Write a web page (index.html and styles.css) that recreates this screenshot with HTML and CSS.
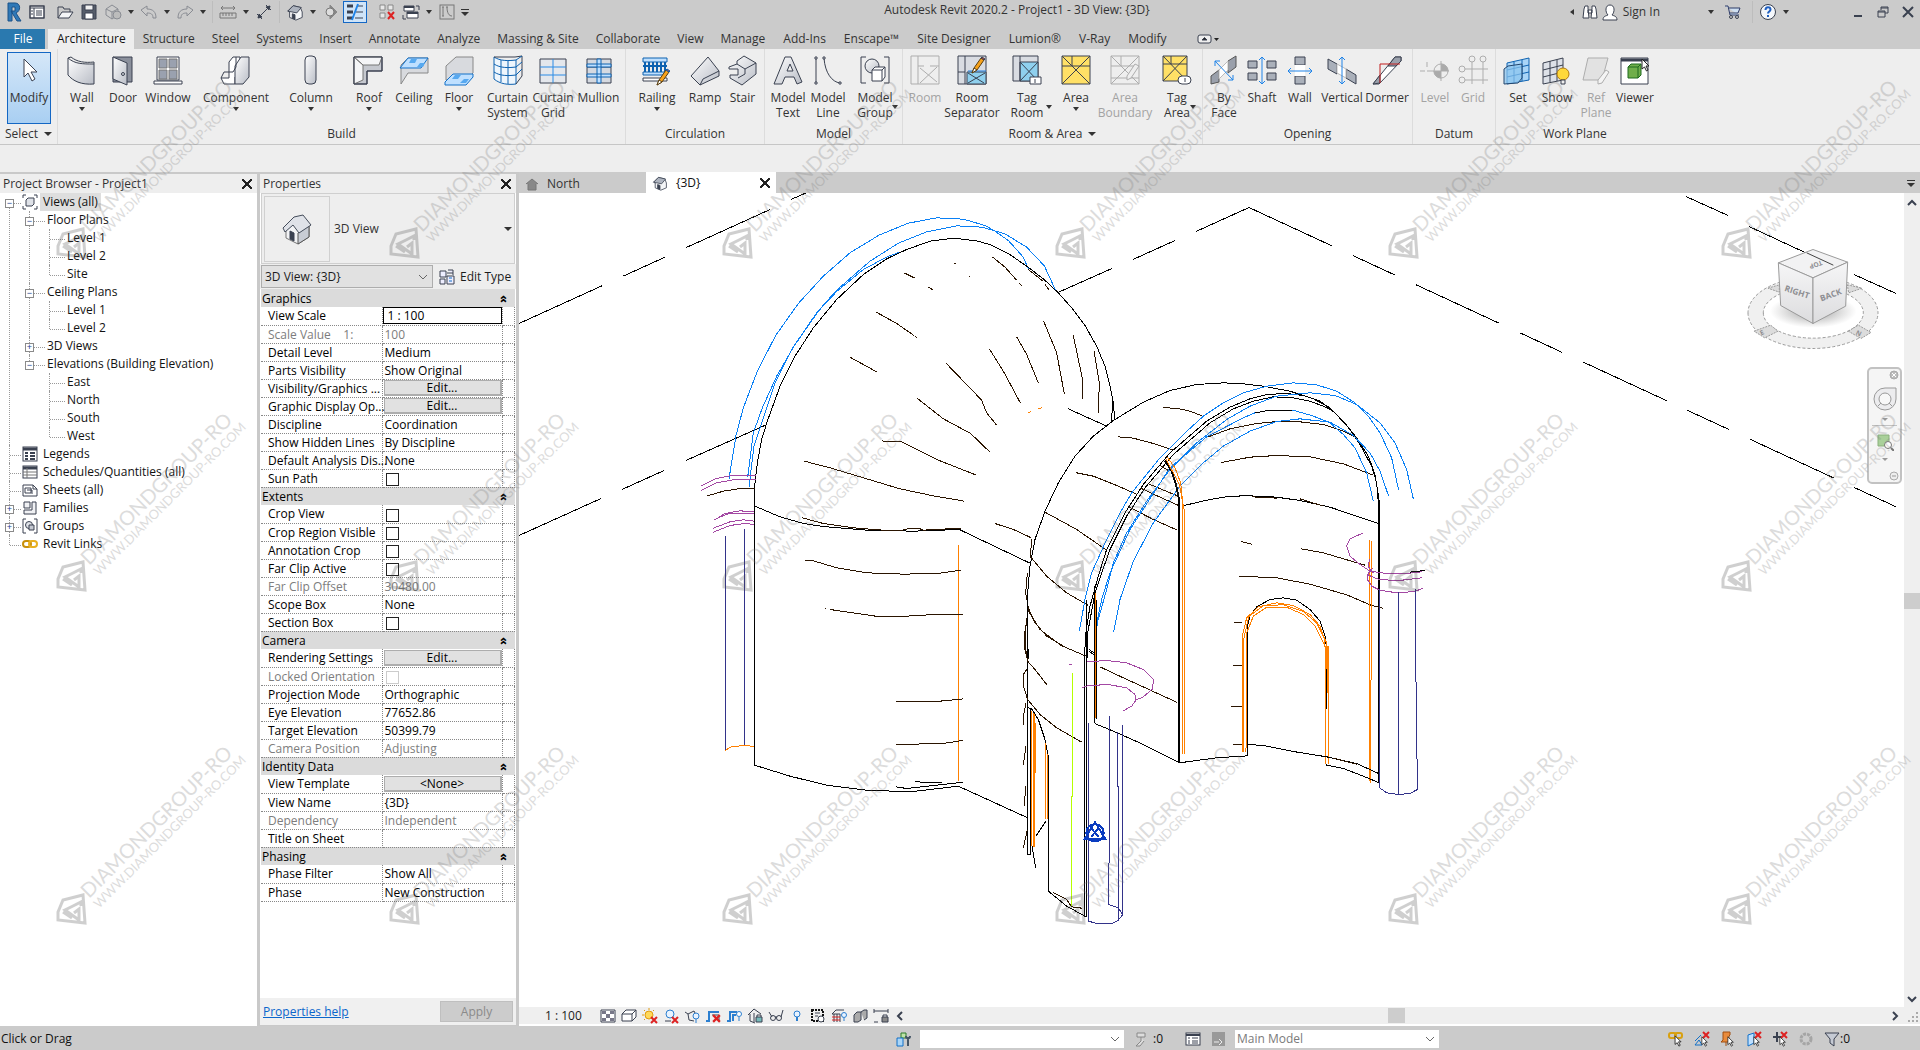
FILE: index.html
```html
<!DOCTYPE html>
<html lang="en">
<head>
<meta charset="utf-8">
<title>Autodesk Revit 2020.2 - Project1 - 3D View: {3D}</title>
<link rel="stylesheet" href="styles.css">
</head>
<body>
<svg class="defs" aria-hidden="true">
  <defs>
    <linearGradient id="steel" x1="0" y1="0" x2="1" y2="1"><stop offset="0" stop-color="#fff"/><stop offset="1" stop-color="#b9bdc6"/></linearGradient>
    <linearGradient id="faceL" x1="0" y1="0" x2="0" y2="1"><stop offset="0" stop-color="#f6f6f7"/><stop offset="1" stop-color="#dcdcde"/></linearGradient>
    <radialGradient id="shade"><stop offset="0" stop-color="#777" stop-opacity=".8"/><stop offset="1" stop-color="#999" stop-opacity="0"/></radialGradient>
    <symbol id="hatch-house" viewBox="0 0 20 20"><path d="M2 9 8 3l8 2 2 5v6l-7 3-7-3v-6z" fill="#f4f5f7" stroke="#3a4150"/><path d="M2 9l6-6 9 2-5 6z" fill="#aeb4bf" stroke="#3a4150"/><path d="M7 17v-5l3 1v5z" fill="#3a4150"/></symbol>
    <symbol id="cursor" viewBox="0 0 10 14"><path d="M1 1v10l2.500-2 2 4 1.500-1-2-4h3z" fill="#fff" stroke="#222" stroke-width="1"/></symbol>
    <symbol id="redx" viewBox="0 0 8 8"><path d="M1 1l6 6M7 1l-6 6" stroke="#d22" stroke-width="2" fill="none"/></symbol>
    <symbol id="pencil" viewBox="0 0 14 18"><path d="M1 17l2-5 7-10 3 2-7 10z" fill="#f7a21b" stroke="#5a4012"/><path d="M10 2l1-1 3 2-1 1z" fill="#d43"/><path d="M1 17l2-5 3 2z" fill="#fff" stroke="#5a4012"/></symbol>
  </defs>
</svg>

<div class="app">
<header class="titlebar">
  <div class="qat">
    <button class="q" aria-label="Revit"><svg width="18" height="20" viewBox="0 0 18 20"><path d="M4 1v18h4V5h3v4H7l6 10h4l-5-8c5-2 5-10-1-10z" fill="#2f78b7" stroke="#1d5288"/></svg></button>
    <button class="q" aria-label="Properties"><svg width="16" height="16" viewBox="0 0 16 16"><rect x="1" y="2" width="14" height="12" fill="#fff"/><path d="M1 4h14M5 4v10M7 7h6M7 9h6M7 11h6M2 7h2M2 10h2"/><rect x="1" y="2" width="14" height="12"/></svg></button>
    <button class="q first" aria-label="Open"><svg width="18" height="16" viewBox="0 0 18 16"><path d="M2 14V3h5l1 2h6v3" /><path d="M2 14l4-6h11l-4 6z" fill="#f4f5f7"/></svg></button>
    <button class="q" aria-label="Save"><svg width="16" height="16" viewBox="0 0 16 16"><path d="M1 1h14v14H1z" fill="#565d6a"/><path d="M4 1h8v5H4z" fill="#f1f1f1"/><path d="M4 9h8v6H4z" fill="#fff"/></svg></button>
    <button class="q dim" aria-label="Synchronize"><svg width="18" height="18" viewBox="0 0 18 18"><path d="M2 6l6-4 6 4v6l-6 4-6-4zM2 6l6 3 6-3M8 9v7"/><circle cx="13" cy="12" r="4" fill="#aaa"/></svg></button>
    <button class="caret" aria-label="Synchronize options"></button>
    <button class="q dim" aria-label="Undo"><svg width="18" height="16" viewBox="0 0 18 16"><path d="M1 6l6-4v3c6 0 9 3 9 9h-3c0-4-2-5-6-5v3z"/></svg></button>
    <button class="caret" aria-label="Undo list"></button>
    <button class="q dim" aria-label="Redo"><svg width="18" height="16" viewBox="0 0 18 16"><path d="M17 6l-6-4v3c-6 0-9 3-9 9h3c0-4 2-5 6-5v3z"/></svg></button>
    <button class="caret" aria-label="Redo list"></button>
    <i class="vsep"></i>
    <button class="q" aria-label="Measure"><svg width="18" height="14" viewBox="0 0 18 14"><path d="M2 3h14M4 1L2 3l2 2M14 1l2 2-2 2" stroke="#777"/><path d="M1 8h16v5H1zM4 8v3M7 8v3M10 8v3M13 8v3" stroke="#777"/></svg></button>
    <button class="caret" aria-label="Measure options"></button>
    <button class="q" aria-label="Aligned dimension"><svg width="18" height="18" viewBox="0 0 18 18"><path d="M3 15L15 3M2 11l5 5M11 2l5 5"/><path d="M3 15l1-4 3 3zM15 3l-1 4-3-3z" fill="#3a4150"/></svg></button>
    <i class="vsep"></i>
    <button class="q" aria-label="Default 3D view"><svg width="18" height="18"><use href="#hatch-house"/></svg></button>
    <button class="caret" aria-label="3D view options"></button>
    <button class="q" aria-label="Section"><svg width="14" height="16" viewBox="0 0 14 16"><path d="M6 1l7 7-7 7z" fill="#888" stroke="#888"/><circle cx="6" cy="8" r="4" fill="#ddd" stroke="#777"/></svg></button>
    <button class="q on" aria-label="Thin lines"><svg width="18" height="18" viewBox="0 0 18 18"><path d="M1 3h6M1 9h6M1 15h6" stroke-width="3"/><path d="M11 3h6M10 9h7M9 15h8"/><path d="M12 1L6 17" stroke="#1e83e8" stroke-width="2"/></svg></button>
    <button class="q gap" aria-label="Close inactive views"><svg width="18" height="18" viewBox="0 0 18 18"><path d="M2 2h5v5H2zM10 2h5v5h-5zM2 10h5v5H2z" fill="#e8e8e8" stroke="#888"/><path d="M10 9l6 7M16 9l-6 7" stroke="#d22" stroke-width="2"/></svg></button>
    <button class="q" aria-label="Switch windows"><svg width="18" height="18" viewBox="0 0 18 18"><path d="M2 3h10v5H2z" fill="#fff"/><path d="M5 9h11v6H5z" fill="#fff"/><path d="M5 10h11M2 4h10" stroke-width="2"/><path d="M14 3h3v4M1 12v4h3"/></svg></button>
    <button class="caret" aria-label="Switch windows list"></button>
    <button class="q" aria-label="Shape editing"><svg width="16" height="16" viewBox="0 0 16 16"><rect x="1" y="1" width="14" height="14" stroke="#777"/><path d="M4 3v9M8 3c0 6 2 9 5 9M3 3h2M3 12h2M7 3h2" stroke="#777"/></svg></button>
    <button class="caret bar" aria-label="Customize toolbar"></button>
  </div>
  <h1 class="title">Autodesk Revit 2020.2 - Project1 - 3D View: {3D}</h1>
  <div class="info">
    <button class="caret left" aria-label="Collapse search"></button>
    <button class="q" aria-label="Search"><svg width="16" height="16" viewBox="0 0 16 16"><path d="M3 2h3v3l1 9H1l1-9zM10 2h3l1 3 1 9H9l1-9zM6 6h4v3H6z" fill="#fff"/></svg></button>
    <button class="q sign"><svg width="16" height="18" viewBox="0 0 16 18"><path d="M1 17c0-4 3-4 5-5-3-3-3-10 2-10s5 7 2 10c2 1 5 1 5 5z" fill="#fff"/></svg>Sign In</button>
    <button class="caret" aria-label="Account"></button>
    <button class="q wide" aria-label="Store"><svg width="18" height="16" viewBox="0 0 18 16"><path d="M1 2h3l2 9h9M5 4h11l-2 5H6" fill="#cfe0f2" stroke="#2d3a66"/><circle cx="7" cy="13" r="1.500"/><circle cx="13" cy="13" r="1.500"/></svg></button>
    <i class="vsep"></i>
    <button class="q" aria-label="Help"><svg width="18" height="18" viewBox="0 0 18 18"><circle cx="9" cy="9" r="7.500" fill="#f4f7fb"/><path d="M6.500 7c0-4 5-3.500 5-.5 0 2-2.500 2-2.500 4M9 12v2" stroke="#1f5fc0" stroke-width="2"/></svg></button>
    <button class="caret" aria-label="Help options"></button>
  </div>
  <div class="winbtns">
    <button aria-label="Minimize"><svg width="12" height="12" viewBox="0 0 12 12"><path d="M2 10h8" stroke-width="2"/></svg></button>
    <button aria-label="Restore"><svg width="12" height="12" viewBox="0 0 12 12"><path d="M4 4V1h7v6H8M1 5h7v6H1zM1 6h7M4 2h7"/></svg></button>
    <button aria-label="Close"><svg width="12" height="12" viewBox="0 0 12 12"><path d="M1 1l10 10M11 1L1 11" stroke-width="2"/></svg></button>
  </div>
</header>

<nav class="tabs" aria-label="Ribbon tabs">
  <button class="file">File</button>
  <button class="cur">Architecture</button><button>Structure</button><button>Steel</button><button>Systems</button><button>Insert</button><button>Annotate</button><button>Analyze</button><button>Massing &amp; Site</button><button>Collaborate</button><button>View</button><button>Manage</button><button>Add-Ins</button><button>Enscape™</button><button>Site Designer</button><button>Lumion®</button><button>V-Ray</button><button>Modify</button>
  <button class="ribtoggle" aria-label="Minimize ribbon"><svg width="22" height="10" viewBox="0 0 22 10"><rect x="1" y="1" width="13" height="8" rx="2" fill="#eee"/><path d="M5 6l2.500-2.500L10 6z" fill="#222"/><path d="M17 4h5l-2.500 3z" fill="#222" stroke="none"/></svg></button>
</nav>

<div class="ribbon">
  <section class="grp g-select">
    <div class="tools"><button class="tool on"><svg class="i" viewBox="0 0 32 32"><path d="M11 5v18l4-4 4 8 3-2-4-7h6z" fill="#fff"/></svg><span>Modify</span></button></div>
    <h2>Select <b></b></h2>
  </section>
  <section class="grp g-build">
    <div class="tools">
      <button class="tool drop"><svg class="i" viewBox="0 0 32 32"><path d="M2 4c7 6 14 6 26 6v20C15 31 7 27 2 21z" fill="url(#steel)"/><path d="M2 4l3-1c6 5 14 6 23 5v2"/></svg><span>Wall</span></button>
      <button class="tool"><svg class="i" viewBox="0 0 32 32"><path d="M6 3h19v25H6z" fill="#8b909c"/><path d="M6 3l14 6v22L6 25z" fill="url(#steel)"/><circle cx="16" cy="20" r="1.500"/></svg><span>Door</span></button>
      <button class="tool"><svg class="i" viewBox="0 0 32 32"><path d="M5 3h22v23H5z" fill="#fff"/><path d="M7 5h8v9H7zM17 5h8v9h-8zM7 16h8v9H7zM17 16h8v9h-8z" fill="#9aa1af" stroke="#777"/><path d="M2 27h28v3H2z" fill="#fff"/></svg><span>Window</span></button>
      <button class="tool drop"><svg class="i" viewBox="0 0 32 32"><path d="M1 24h8V8l4-5h7v15l-5 5v7H4z" fill="#fff"/><path d="M15 30V12l6-9h8v20l-6 7z" fill="url(#steel)"/><path d="M1 24l3-6h9l3-5V3" /></svg><span>Component</span></button>
      <button class="tool drop"><svg class="i" viewBox="0 0 32 32"><rect x="10" y="2" width="11" height="28" rx="4" fill="url(#steel)"/></svg><span>Column</span></button>
      <button class="tool drop"><svg class="i" viewBox="0 0 32 32"><path d="M1 3h28v14H14v13H1z" fill="#c5c8cf"/><path d="M1 3l9 8h16l3-8zM1 3l9 8v15l-9 4z" fill="#f4f5f7" stroke="#777"/><path d="M1 3h28v14H14v13H1z"/></svg><span>Roof</span></button>
      <button class="tool"><svg class="i" viewBox="0 0 32 32"><path d="M3 11l7-7h20v15H10l-7 11z" fill="#d8dade" stroke="#888"/><path d="M10 4h20l-7 10H2z" fill="#bfe0ff" stroke="#1270c8"/><path d="M13 5h6l-2 4h-6zM22 9h5l-2 4h-6z" fill="#57a9f0" stroke="none"/></svg><span>Ceiling</span></button>
      <button class="tool drop"><svg class="i" viewBox="0 0 32 32"><path d="M3 12l10-9h17v16l-7 7H3z" fill="#d8dade" stroke="#888"/><path d="M10 20h20v3l-7 8H2v-3z" fill="#bfe0ff" stroke="#1270c8"/><path d="M12 21h6l-3 4H9zM21 25h5l-3 4h-6z" fill="#57a9f0" stroke="none"/></svg><span>Floor</span></button>
      <button class="tool"><svg class="i blue" viewBox="0 0 32 32"><path d="M2 3c6 4 14 4 22 3v24c-8 1-16 0-22-5z" fill="#eef6fd"/><path d="M2 3h21l7-1v20l-6 8" stroke="#3a4150"/><path d="M24 6l6-4M2 10c6 4 14 4 22 3l6-5M2 18c6 4 14 4 22 3l6-6M9 6v22M16 7v23"/></svg><span>Curtain System</span></button>
      <button class="tool"><svg class="i blue" viewBox="0 0 32 32"><path d="M3 5h26v24H3z" fill="#e4e7ec" stroke="#3a4150"/><path d="M16 5v24M3 13h26M3 21h26" stroke="#2b8be6"/></svg><span>Curtain Grid</span></button>
      <button class="tool"><svg class="i" viewBox="0 0 32 32"><path d="M4 5h24v24H4zM4 13h24M4 21h24" fill="#d5d9e0"/><path d="M14 5h4v24h-4zM4 10h24v3H4zM4 20h24v3H4z" fill="#bfe0ff" stroke="#0e62b0"/></svg><span>Mullion</span></button>
    </div>
    <h2>Build</h2>
  </section>
  <section class="grp g-circ">
    <div class="tools">
      <button class="tool drop"><svg class="i blue" viewBox="0 0 32 32"><path d="M2 4h24v4H2zM2 18h24v3H2z" fill="#bfe0ff"/><path d="M2 24h24v3H2z" fill="#fff" stroke="#3a4150"/><path d="M4 8v10M8 8v10M12 8v10M16 8v10M20 8v10M24 8v10M2 12h24" stroke-width="2"/><use href="#pencil" x="15" y="14" width="14" height="18"/></svg><span>Railing</span></button>
      <button class="tool"><svg class="i" viewBox="0 0 32 32"><path d="M2 22L19 3l11 14v5L11 31z" fill="url(#steel)"/><path d="M11 31l3-6L30 17"/></svg><span>Ramp</span></button>
      <button class="tool"><svg class="i" viewBox="0 0 32 32"><path d="M2 13l8-3V7l7-5 12 7v11l-14 11-12-7v-3h8v-6H2z" fill="url(#steel)"/><path d="M10 10l8 5v5l-7 4M18 15l11-6"/></svg><span>Stair</span></button>
    </div>
    <h2>Circulation</h2>
  </section>
  <section class="grp g-model">
    <div class="tools">
      <button class="tool"><svg class="i" viewBox="0 0 32 32"><path d="M2 30L13 3h6l11 25-5 2-3-7h-9l-3 7zM15 17h6l-3-7z" fill="url(#steel)"/></svg><span>Model Text</span></button>
      <button class="tool"><svg class="i" viewBox="0 0 32 32"><path d="M4 4v25M12 4c1 15 8 24 16 25"/><path d="M3 3h2v2H3zM3 28h2v2H3zM11 3h2v2h-2zM27 28h2v2h-2z" fill="#fff"/></svg><span>Model Line</span></button>
      <button class="tool side"><svg class="i" viewBox="0 0 32 32"><path d="M7 3H2v26h5M25 3h5v26h-5"/><circle cx="13" cy="12" r="7" fill="url(#steel)"/><path d="M13 16l3-3h10v10l-3 4H13zM13 16h10v11M23 16l3-3" fill="#fff"/></svg><span>Model Group</span></button>
    </div>
    <h2>Model</h2>
  </section>
  <section class="grp g-room">
    <div class="tools">
      <button class="tool" disabled><svg class="i" viewBox="0 0 32 32"><path d="M2 2h28v28H2zM9 2v28M9 12h6M21 12h9M11 14l17 14M28 13L11 29"/></svg><span>Room</span></button>
      <button class="tool"><svg class="i" viewBox="0 0 32 32"><path d="M2 2h28v28H2z" fill="#d9dce2"/><path d="M11 18h19v12H11z" fill="#8fd0ee"/><path d="M9 2v28M2 18h7M12 19l16 10M29 19L12 29"/><path d="M12 17h18" stroke="#1e83e8"/><use href="#pencil" x="15" y="2" width="14" height="18"/></svg><span>Room Separator</span></button>
      <button class="tool side"><svg class="i" viewBox="0 0 32 32"><path d="M2 2h25v25H2z" fill="#d9dce2"/><path d="M9 8h18v19H9z" fill="#8fd0ee"/><path d="M9 8l18 19M27 8L9 27M9 2v25"/><path d="M19 23h11v7H19z" fill="#fff"/><path d="M24 25v4"/></svg><span>Tag Room</span></button>
      <button class="tool drop"><svg class="i" viewBox="0 0 32 32"><path d="M2 2h28v28H2z" fill="#ffe066"/><path d="M2 2l28 28M30 2L2 30M2 12h28M12 2v10" stroke-width="1"/></svg><span>Area</span></button>
      <button class="tool" disabled><svg class="i" viewBox="0 0 32 32"><path d="M2 2h28v28H2zM2 2l28 28M30 2L2 30M2 12h28M12 2v10M2 24h28"/><path d="M18 22l8-12 4 2-8 12-4 2z" fill="#eee"/></svg><span>Area Boundary</span></button>
      <button class="tool side"><svg class="i" viewBox="0 0 32 32"><path d="M2 2h24v25H2z" fill="#ffe066"/><path d="M2 2l24 25M26 2L2 27M2 10h24M10 2v8" stroke-width="1"/><rect x="17" y="22" width="13" height="8" rx="4" fill="#fff"/><path d="M24 24v4"/></svg><span>Tag Area</span></button>
    </div>
    <h2>Room &amp; Area <b></b></h2>
  </section>
  <section class="grp g-open">
    <div class="tools">
      <button class="tool"><svg class="i" viewBox="0 0 32 32"><path d="M3 30V22l8-6v12zM20 13V7l8-5v11l-8 6z" fill="#9aa0ab" stroke="#555"/><path d="M11 16l9-9v9l-9 9z" fill="#fff" stroke="#bbb"/><path d="M7 7l18 19M7 12V7h5M20 26h5v-5" stroke="#1e83e8"/></svg><span>By Face</span></button>
      <button class="tool"><svg class="i" viewBox="0 0 32 32"><path d="M2 7h9v7H2zM2 19h9v7H2zM21 7h9v7h-9zM21 19h9v7h-9z" fill="#aab0ba"/><path d="M16 3v27M13 6l3-3 3 3M13 27l3 3 3-3" stroke="#1e83e8"/></svg><span>Shaft</span></button>
      <button class="tool"><svg class="i" viewBox="0 0 32 32"><path d="M11 3h10v8H11zM11 22h10v8H11z" fill="#aab0ba"/><path d="M11 11h10v11H11z" fill="#fff" stroke="none"/><path d="M4 17h24M7 14l-3 3 3 3M25 14l3 3-3 3" stroke="#1e83e8"/></svg><span>Wall</span></button>
      <button class="tool"><svg class="i" viewBox="0 0 32 32"><path d="M2 5l9 5v10l-9-5zM20 15l10 6v9l-10-6z" fill="#aab0ba"/><path d="M11 10l9 5v9l-9-5z" fill="#fff" stroke="#bbb"/><path d="M16 3v27M13 6l3-3 3 3M13 27l3 3 3-3" stroke="#1e83e8"/></svg><span>Vertical</span></button>
      <button class="tool"><svg class="i" viewBox="0 0 32 32"><path d="M2 30L24 3h6v4L8 30z" fill="#fff"/><path d="M24 3h6v4l-5 5h-8zM2 30l7-9v8z" fill="#9aa0ab"/><path d="M9 29V10h20" stroke="#c21f1f"/></svg><span>Dormer</span></button>
    </div>
    <h2>Opening</h2>
  </section>
  <section class="grp g-datum">
    <div class="tools">
      <button class="tool" disabled><svg class="i" viewBox="0 0 32 32"><path d="M1 17h5M8 17h22M8 8v5M22 7v20"/><circle cx="22" cy="17" r="7" fill="#eee"/><path d="M22 10a7 7 0 0 1 7 7h-7zM22 24a7 7 0 0 1-7-7h7z" fill="#aaa"/></svg><span>Level</span></button>
      <button class="tool" disabled><svg class="i" viewBox="0 0 32 32"><path d="M15 8v22M26 8v22M8 15h23M8 26h23"/><circle cx="15" cy="5" r="3"/><circle cx="26" cy="5" r="3"/><circle cx="5" cy="15" r="3"/><circle cx="5" cy="26" r="3"/></svg><span>Grid</span></button>
    </div>
    <h2>Datum</h2>
  </section>
  <section class="grp g-plane">
    <div class="tools">
      <button class="tool"><svg class="i blue" viewBox="0 0 32 32"><path d="M5 9l22-5v22L5 30z" fill="#a9d5f7"/><path d="M12 8v21M20 6v21M5 16l22-5M5 23l22-5"/><path d="M2 15l4-3 14-2v14l-4 5-14 1z" fill="#8cc4ee" fill-opacity=".7" stroke="#23466e"/></svg><span>Set</span></button>
      <button class="tool"><svg class="i" viewBox="0 0 32 32"><path d="M2 9l20-5v22L2 30zM9 7v21M16 6v21M2 16l20-5M2 23l20-5" fill="#dde1e8"/><circle cx="22" cy="20" r="6" fill="#ffd83a" stroke="#b07a10"/><path d="M20 26h4v4h-4z" fill="#eee"/></svg><span>Show</span></button>
      <button class="tool" disabled><svg class="i" viewBox="0 0 32 32"><path d="M8 4h20l-6 22H3z" fill="#e2e2e2"/><path d="M18 26l8-10 3 2-7 11-4 1z" fill="#f4f4f4"/></svg><span>Ref Plane</span></button>
      <button class="tool"><svg class="i" viewBox="0 0 32 32"><path d="M2 4h27v26H2z" fill="#fff"/><path d="M2 6h27" stroke-width="3"/><path d="M9 13l3-3h10v11l-3 3H9z" fill="#6fae4a" stroke="#1e6a1e"/><path d="M9 13h10v11M19 13l3-3" stroke="#1e6a1e"/><use href="#cursor" x="22" y="3" width="10" height="16"/></svg><span>Viewer</span></button>
    </div>
    <h2>Work Plane</h2>
  </section>
</div>
<div class="options"></div>

<main class="work">
  <aside class="browser">
    <header class="phead"><h2>Project Browser - Project1</h2><button class="x" aria-label="Close project browser"></button></header>
    <ul class="tree">
      <li><div class="row"><button class="ex" aria-label="Collapse Views">−</button><svg class="s" viewBox="0 0 16 16"><path d="M4 1H1v3M12 1h3v3M1 12v3h3M15 12v3h-3"/><path d="M4 6l2-2h6v6l-2 2H4z" fill="#dfe2e8"/></svg><span class="hot">Views (all)</span></div>
        <ul>
          <li><div class="row"><button class="ex" aria-label="Collapse Floor Plans">−</button>Floor Plans</div><ul><li><div class="row">Level 1</div></li><li><div class="row">Level 2</div></li><li><div class="row">Site</div></li></ul></li>
          <li><div class="row"><button class="ex" aria-label="Collapse Ceiling Plans">−</button>Ceiling Plans</div><ul><li><div class="row">Level 1</div></li><li><div class="row">Level 2</div></li></ul></li>
          <li><div class="row"><button class="ex" aria-label="Expand 3D Views">+</button>3D Views</div></li>
          <li><div class="row"><button class="ex" aria-label="Collapse Elevations">−</button>Elevations (Building Elevation)</div><ul><li><div class="row">East</div></li><li><div class="row">North</div></li><li><div class="row">South</div></li><li><div class="row">West</div></li></ul></li>
        </ul>
      </li>
      <li><div class="row"><svg class="s" viewBox="0 0 16 16"><rect x="1" y="1" width="14" height="14" fill="#fff"/><path d="M1 3h14" stroke-width="3"/><path d="M3 7h3M8 7h5M3 10h3M8 10h5M3 13h3M8 13h5" stroke-width="2"/></svg>Legends</div></li>
      <li><div class="row"><svg class="s" viewBox="0 0 16 16"><rect x="1" y="2" width="14" height="12" fill="#fff"/><path d="M1 4h14" stroke-width="3"/><path d="M1 8h14M1 11h14M5 4v10" stroke="#777"/></svg>Schedules/Quantities (all)</div></li>
      <li><div class="row"><svg class="s" viewBox="0 0 16 16"><path d="M1 3h10l4 4v7H1z" fill="#fff"/><path d="M11 3v4h4M3 6h6v5H3zM5 8h5v4"/></svg>Sheets (all)</div></li>
      <li><div class="row"><button class="ex" aria-label="Expand Families">+</button><svg class="s" viewBox="0 0 16 16"><path d="M2 2h6v6H2zM10 2h4v12H2v-4h8z" fill="#f0f1f4"/></svg>Families</div></li>
      <li><div class="row"><button class="ex" aria-label="Expand Groups">+</button><svg class="s" viewBox="0 0 16 16"><path d="M4 1H1v14h3M12 1h3v14h-3"/><circle cx="7" cy="7" r="3.500" fill="#dfe2e8"/><path d="M7 7h5v5H7z" fill="#c5c9d2"/></svg>Groups</div></li>
      <li><div class="row"><svg class="s" viewBox="0 0 16 16"><rect x="1" y="5" width="8" height="6" rx="3" stroke="#c8900a" stroke-width="2"/><rect x="7" y="5" width="8" height="6" rx="3" stroke="#e8b020" stroke-width="2"/></svg>Revit Links</div></li>
    </ul>
  </aside>

  <aside class="props">
    <header class="phead"><h2>Properties</h2><button class="x" aria-label="Close properties"></button></header>
    <button class="type"><span class="thumb"><svg width="32" height="32" viewBox="0 0 32 32"><path d="M5 15v10l12 6 11-7V13l-9-8z" fill="#f2f3f5" stroke="#777"/><path d="M17 20v11l11-7V12z" fill="#c8ccd4" stroke="#555"/><path d="M2 15L13 4 22 2l8 10-12 8-6-8-8 7z" fill="#dfe2e8" stroke="#444c5a"/><path d="M9 18l4 2v8l-4-2z" fill="#3a4150"/></svg></span>3D View<b></b></button>
    <div class="inst"><select aria-label="Instance"><option>3D View: {3D}</option></select><button class="edtype"><svg width="16" height="16" viewBox="0 0 16 16"><path d="M1 2h6v6H1zM9 1h5v5M1 10h5v5H1zM8 4h6M8 7v8h7V7z" fill="#eef"/><path d="M10 9h3M10 12h3" stroke="#1270c8"/></svg>Edit Type</button></div>
    <div class="pscroll">
    <table class="pt">
      <colgroup><col class="c1"><col class="c2"><col></colgroup>
      <tbody>
      <tr class="sec"><th colspan="3" scope="colgroup">Graphics<i>«</i></th></tr>
      <tr><th scope="row"><label for="vs">View Scale</label></th><td><input class="tx" id="vs" value="1 : 100"></td><td></td></tr>
      <tr class="off"><th scope="row">Scale Value &nbsp;&nbsp; 1:</th><td>100</td><td></td></tr>
      <tr><th scope="row">Detail Level</th><td>Medium</td><td></td></tr>
      <tr><th scope="row">Parts Visibility</th><td>Show Original</td><td></td></tr>
      <tr><th scope="row">Visibility/Graphics ...</th><td><button>Edit...</button></td><td></td></tr>
      <tr><th scope="row">Graphic Display Op...</th><td><button>Edit...</button></td><td></td></tr>
      <tr><th scope="row">Discipline</th><td>Coordination</td><td></td></tr>
      <tr><th scope="row">Show Hidden Lines</th><td>By Discipline</td><td></td></tr>
      <tr><th scope="row">Default Analysis Dis...</th><td>None</td><td></td></tr>
      <tr><th scope="row"><label for="sp">Sun Path</label></th><td><input type="checkbox" id="sp"></td><td></td></tr>
      </tbody><tbody>
      <tr class="sec"><th colspan="3" scope="colgroup">Extents<i>«</i></th></tr>
      <tr><th scope="row"><label for="cv">Crop View</label></th><td><input type="checkbox" id="cv"></td><td></td></tr>
      <tr><th scope="row"><label for="cr">Crop Region Visible</label></th><td><input type="checkbox" id="cr"></td><td></td></tr>
      <tr><th scope="row"><label for="ac">Annotation Crop</label></th><td><input type="checkbox" id="ac"></td><td></td></tr>
      <tr><th scope="row"><label for="fc">Far Clip Active</label></th><td><input type="checkbox" id="fc"></td><td></td></tr>
      <tr class="off"><th scope="row">Far Clip Offset</th><td>30480.00</td><td></td></tr>
      <tr><th scope="row">Scope Box</th><td>None</td><td></td></tr>
      <tr><th scope="row"><label for="sb">Section Box</label></th><td><input type="checkbox" id="sb"></td><td></td></tr>
      </tbody><tbody>
      <tr class="sec"><th colspan="3" scope="colgroup">Camera<i>«</i></th></tr>
      <tr><th scope="row">Rendering Settings</th><td><button>Edit...</button></td><td></td></tr>
      <tr class="off"><th scope="row"><label for="lo">Locked Orientation</label></th><td><input type="checkbox" id="lo" disabled></td><td></td></tr>
      <tr><th scope="row">Projection Mode</th><td>Orthographic</td><td></td></tr>
      <tr><th scope="row">Eye Elevation</th><td>77652.86</td><td></td></tr>
      <tr><th scope="row">Target Elevation</th><td>50399.79</td><td></td></tr>
      <tr class="off"><th scope="row">Camera Position</th><td>Adjusting</td><td></td></tr>
      </tbody><tbody>
      <tr class="sec"><th colspan="3" scope="colgroup">Identity Data<i>«</i></th></tr>
      <tr><th scope="row">View Template</th><td><button>&lt;None&gt;</button></td><td></td></tr>
      <tr><th scope="row">View Name</th><td>{3D}</td><td></td></tr>
      <tr class="off"><th scope="row">Dependency</th><td>Independent</td><td></td></tr>
      <tr><th scope="row">Title on Sheet</th><td></td><td></td></tr>
      </tbody><tbody>
      <tr class="sec"><th colspan="3" scope="colgroup">Phasing<i>«</i></th></tr>
      <tr><th scope="row">Phase Filter</th><td>Show All</td><td></td></tr>
      <tr><th scope="row">Phase</th><td>New Construction</td><td></td></tr>
      </tbody>
    </table>
    </div>
    <footer class="pfoot"><a href="#help">Properties help</a><button disabled>Apply</button></footer>
  </aside>

  <section class="view">
    <div class="vtabs">
      <button class="vtab"><svg width="14" height="14" viewBox="0 0 14 14"><path d="M1 7l6-5 6 5M3 7v6h8V7" fill="#888" stroke="#777"/></svg>North</button>
      <div class="vtab cur"><svg width="16" height="16"><use href="#hatch-house"/></svg>{3D}<button class="x" aria-label="Close view"></button></div>
      <button class="caret bar" aria-label="View list"></button>
    </div>
    <div class="canvas">
      <svg class="model" viewBox="519 193 1385 815" preserveAspectRatio="xMidYMid slice" role="img" aria-label="3D wireframe of a vaulted building">
        <g class="k">
          <path d="M770 210L519 324" stroke-dasharray="92 23 46 23"/><path d="M791 200l16-7"/>
          <path d="M1249 208l-53 24M1175 241l-42 19M1112 269l-54 24"/>
          <path d="M767 425l-81 36M664 471l-42 19M601 499l-82 37"/>
          <path d="M1249 208L1904 511" stroke-dasharray="92 23 46 23"/>
          <path d="M1686 197l42 19M1749 227l84 39M1854 275l42 19"/>
        </g>
        <g transform="translate(680 200) scale(.33333)">
          <path class="bl" d="M147 838 168 708 190 625 232 515 287 408 355 312 430 230 510 160 597 107 685 71 770 55 850 59 915 78 945 95 985 123 1030 173 1045 208M203 833 220 700 247 625 290 530 345 435 410 340 470 272 570 185 655 131 740 97 830 79 905 83 975 103 1040 143 1093 199 1128 275M207 862 222 740 255 640 285 550 335 450 415 335 470 276 550 210 625 170 660 158"/>
          <path class="k" d="M224 1700V860L232 790 245 720 262 665 300 560 345 470 400 385 470 300 550 225 620 178 680 150 750 125 820 116 890 124 935 137 985 162 1040 200 1090 238 1135 280 1175 325 1215 378 1250 440 1275 500 1290 560 1300 610 1304 660M1299 600 1294 668M1165 628 1280 680"/>
          <path class="k" d="M225 920 300 952 370 972 430 981 560 992 700 995 838 990 1052 1092"/>
          <path class="pu" d="M62 860 105 838 150 829H228M64 872 110 850 160 841H228M103 962 135 942 180 934 222 937M110 957 145 943H222M100 986 150 967 190 961 222 965M100 998 150 978 200 971 222 976"/>
          <path class="dk" d="M82 889 130 875 175 868H224M672 220 705 236M589 338 650 372 702 408M508 472 590 517M799 492 905 602 920 640 950 677M710 595 790 658 872 702 929 757M607 722 612 727 660 725 770 780 887 826M373 785 450 805 550 835 660 868 760 889 853 905M928 448 970 515 1021 610M1010 412 1040 465 1075 550M1091 365 1130 460 1153 583M1180 408 1197 490 1208 540V600M1242 455 1258 550 1255 640M937 172 975 203 1010 242M1018 252 1026 260M1045 210 1090 246M1095 255 1108 272M823 190 828 193M867 231 870 233M745 262 758 271M706 411 711 415M367 955 430 972 520 985 610 992 660 994 690 986 715 986 730 992 842 986M945 972 1000 990 1052 1014M1187 820 1240 830 1320 862"/>
          <path class="or" d="M1045 640 1052 636M1075 628 1086 625"/>
        </g>
        <g transform="translate(680 520) scale(.33333)">
          <path class="na" d="M136 50V693M193 30V677"/>
          <path class="or" d="M136 693 150 683 195 677 222 682M835 78V785"/>
          <path class="k" d="M224 737 330 770 440 797 560 812 690 817 835 800 1043 895M705 787 785 790M648 802 680 807 850 788"/>
          <path class="dk" d="M375 124H400L470 145 560 160 675 164 780 161 842 152M436 268h3M450 270 540 283 600 292 680 290 780 284H850M648 545H780L850 538M648 675 790 672 848 663"/>
        </g>
        <g transform="translate(1010 360) scale(.33333)">
          <path class="k" d="M55 900 52 800 53 700 60 620 75 540 105 455 145 370 195 290 250 230 310 183 400 128 480 93 560 75 640 70 700 73 760 80 840 95 910 118 960 145 1000 185 1040 235 1075 290 1095 345 1107 420 1110 500V900M224 900 226 830 240 740 265 650 290 570 345 460 400 375 480 280 590 185 660 143 720 118 770 105 830 102 880 108 930 125 975 160 1020 210 1050 255 1085 320 1100 370 1105 430V1270M231 900 233 820 255 700 275 640 300 570 350 470 405 385 490 285 600 190 670 148 730 125 790 112 850 115 900 125 940 140 960 150M523 438 590 422 660 410 720 409 800 413 870 423 960 443 1108 493M735 160 780 152H845M1200 638 1245 633"/>
          <path class="dk" d="M595 232 660 208 740 192 800 186 870 187 940 195 1000 215 1040 235M634 309 720 293 800 288 900 292 1000 313 1090 347M870 418 940 440M725 412 800 416M460 145 500 146 540 155 583 172M325 232 370 236 430 252 490 272M200 340 250 350 320 378 380 404M105 458 200 510 290 572M66 540 60 590 110 650 170 700 235 738M55 745 75 790 110 830 165 863 228 890M52 750 90 810 160 863M358 443 430 480 500 511M390 385 450 413 510 440M415 373 500 408M450 318 478 335M693 546 725 554M873 568 940 580 1065 617M687 650 800 655 900 674 1010 706 1085 738 1118 746M672 790H695M52 640 47 700 55 745 45 820 47 870 55 900"/>
          <path class="bl" d="M208 815 225 720 245 640 290 540 330 460 365 400 450 295 520 225 580 170 640 130 700 100 770 80 850 70 920 76 980 95 1035 130 1075 170 1110 220 1145 295 1166 392M255 860 262 790 290 690 310 610 350 520 410 425 480 330 560 250 650 180 720 140 800 110 900 100 975 108 1040 135 1110 190 1155 250 1190 330 1210 418M258 800 275 720 300 640 360 510 480 325 590 232 700 175 735 160M845 151 905 168 960 190 1000 225 1035 265 1070 340 1090 425M311 818 330 720 370 605 430 490 510 380 580 310 640 260 720 215 800 186 870 178 960 188 1030 228 1080 280 1110 335 1136 410"/>
          <path class="k w2" d="M465 303 485 335 498 375 507 420V1210"/>
          <path class="k" d="M712 1050V800L720 770 740 742 780 720 820 715 860 722 900 750 930 785 945 830 949 860V1050M254 680V1092"/>
          <path class="or" d="M472 293 495 325 512 370 518 430V1183M468 300 490 340 508 375 524 460V1183M697 1178V830L710 775 745 742 800 730 850 738 900 765 930 800 945 845 946 1215M708 1178 710 820 730 770 770 743 830 743 880 765 915 800 940 850 957 880V1215M702 1178V835L716 772 760 738 820 736 880 756 920 790 950 850 952 1000M1078 543V1265M1085 545V960L1083 962V1270M257 700V1075"/>
          <path class="or w2" d="M700 1178V835M954 860V1000"/>
          <path class="pu" d="M1060 520 1020 538 1010 560 1020 590 1050 615 1080 635 1130 642H1190L1235 637M1090 625 1072 645 1100 658 1160 664 1235 655M1072 645V660L1085 680 1110 692 1160 700 1215 696 1238 686M1080 598 1074 620 1090 640"/>
          <path class="na" d="M1165 697V1303M1216 688V900L1219 1000 1222 1290 1200 1302 1165 1305 1130 1300 1109 1285V690"/>
        </g>
        <g transform="translate(1010 600) scale(.33333)">
          <path class="k" d="M53 0V765H62V325M55 325 65 328 85 360 105 420 115 470V875L170 920 225 950M108 665 78 710M66 740 77 805M223 165V950H229V0M237 150 252 160M237 156 252 165M254 372 310 395 400 435 508 490 620 475 712 469V320M715 435 760 438 850 456 950 472 1040 492 1106 522M947 496 1000 507 1060 530 1108 550M259 0V360"/>
          <path class="dk" d="M50 70 42 110 45 150 53 185 75 210 110 255M50 210 40 225V260L53 300 90 345 140 385 215 428M48 310 40 350 42 375M48 440 40 495M48 560 42 620M52 690 40 745M130 880 170 900 185 922 215 926M272 203 340 235 500 308M672 70H695M670 197H697M663 322H697M670 436H697M970 476 1040 494"/>
          <path class="or" d="M66 335V740M70 340V742M74 345V742M78 370V520M106 430V660M112 465V660"/>
          <path class="li" d="M187 222V590L184 592V920"/>
          <path class="pu" d="M232 187 290 183 350 190 400 210 430 240 428 268 400 292 375 303M215 265 240 257 300 256 350 265 375 285 377 303 365 320 338 335M178 196H186"/>
          <path class="na" d="M236 370V965L260 972H305L325 962 337 947V378M298 350V790L295 792V915L325 925 337 945M322 397V560L325 562V965"/>
          <g class="sym"><path d="M255 668 286 718H224Z"/><circle cx="255" cy="700" r="26"/><path d="M243 686l24 26M267 686l-24 26"/></g>
        </g>
        <g transform="translate(1680 190) scale(.33333)" class="cube">
          <path d="M204 370a195 107 0 1 0 390 0a195 107 0 1 0-390 0zM250 370a150 76 0 1 0 300 0a150 76 0 1 0-300 0z" fill="#f0f0f0" fill-rule="evenodd" stroke-dasharray="3 2"/>
          <path d="M222 425l50-18 22 18-40 20zM505 425l30-18 38 22-30 18zM264 296l34-10v22zM502 286l44 10-40 14z" fill="#dcdcdc" stroke-dasharray="2 1"/>
          <ellipse cx="400" cy="365" rx="130" ry="50" fill="url(#shade)" stroke="none"/>
          <path d="M399 180 503 218 399 265 295 220z" fill="#f2f2f3"/><path d="M295 220 399 265V402L302 348z" fill="url(#faceL)"/><path d="M503 218 497 350 399 402V265z" fill="url(#faceL)"/>
          <g class="ct"><text transform="translate(312 304) rotate(18)">RIGHT</text><text transform="translate(424 336) rotate(-20)">BACK</text><text class="sm" transform="translate(424 212) rotate(160)">TOP</text><text class="sm" transform="translate(244 438) rotate(-25)">E</text><text class="sm" transform="translate(526 434) rotate(25)">N</text></g>
          <path class="k" d="M380 190 460 227"/>
        </g>
      </svg>
      <div class="nav">
        <button aria-label="Close bar"><svg width="10" height="10" viewBox="0 0 10 10"><circle cx="5" cy="5" r="4" fill="#bbb" stroke="#aaa"/><path d="M3 3l4 4M7 3L3 7" stroke="#fff"/></svg></button>
        <button class="mid" aria-label="Steering wheel"><svg width="24" height="24" viewBox="0 0 24 24"><path d="M12 1h11v11a11 11 0 1 1-11-11z" fill="#ececee" stroke="#999"/><circle cx="12" cy="12" r="6" fill="#f8f8f8" stroke="#999"/><path d="M5 19l3-3M19 19l-3-3" stroke="#999"/></svg></button>
        <b></b><hr>
        <button class="mid" aria-label="Zoom region"><svg width="18" height="18" viewBox="0 0 18 18"><path d="M2 2h11v11H2z" fill="#a9d09a" stroke="#8aaf7c"/><circle cx="12" cy="12" r="3.500" fill="#fff" stroke="#777"/><path d="M15 15l3 3" stroke="#777" stroke-width="2"/></svg></button>
        <b></b>
        <button aria-label="Bar options"><svg width="10" height="10" viewBox="0 0 10 10"><circle cx="5" cy="5" r="4" fill="#eee" stroke="#aaa"/><path d="M3 5h4" stroke="#999"/></svg></button>
      </div>
    </div>
    <div class="vscroll"><button aria-label="Scroll up"><svg width="10" height="8" viewBox="0 0 10 8"><path d="M1 6l4-4 4 4" stroke-width="2"/></svg></button><i></i><button aria-label="Scroll down"><svg width="10" height="8" viewBox="0 0 10 8"><path d="M1 2l4 4 4-4" stroke-width="2"/></svg></button></div>
    <div class="vbar">
      <button class="scale">1 : 100</button>
      <button aria-label="Detail level"><svg class="s" viewBox="0 0 16 16"><path d="M1 2h14v12H1z" fill="#fff"/><path d="M2 3h4v3H2zM10 3h4v3h-4zM6 6h4v4H6zM2 10h4v3H2zM10 10h4v3h-4z" fill="#778" stroke="none"/></svg></button>
      <button aria-label="Visual style"><svg class="s" viewBox="0 0 16 16"><path d="M1 6l4-4h10v7l-4 4H1zM1 6h10v7M11 6l4-4" fill="#fff"/></svg></button>
      <button aria-label="Sun path"><svg class="s" viewBox="0 0 16 16"><circle cx="7" cy="7" r="4" fill="#ffd95a" stroke="#e09a10"/><path d="M7 0v2M0 7h2M2 2l1 1M12 2l-1 1M2 12l1-1" stroke="#e09a10"/><use href="#redx" x="8" y="8" width="8" height="8"/></svg></button>
      <button aria-label="Shadows"><svg class="s" viewBox="0 0 16 16"><circle cx="7" cy="6" r="4" fill="#e8f3ff" stroke="#2c7fd0"/><path d="M2 13h6"/><use href="#redx" x="8" y="8" width="8" height="8"/></svg></button>
      <button aria-label="Rendering dialog"><svg class="s" viewBox="0 0 16 16"><path d="M1 4l3 2 6-3 2 4M4 6l1 6 5 1"/><circle cx="12" cy="8" r="3" fill="#e8f3ff" stroke="#2c7fd0"/><path d="M12 11v4" stroke="#2c7fd0"/></svg></button>
      <button aria-label="Crop view"><svg class="s" viewBox="0 0 16 16"><path d="M1 13h3V4h10" stroke="#2c7fd0" stroke-width="2"/><path d="M7 7h7v7" /><use href="#redx" x="7" y="6" width="9" height="9"/></svg></button>
      <button aria-label="Show crop region"><svg class="s" viewBox="0 0 16 16"><path d="M1 13h3V4h7M7 13V7h3" stroke="#2c7fd0" stroke-width="2"/><circle cx="13" cy="6" r="2.500" fill="#fff" stroke="#2c7fd0"/><path d="M13 9v4" stroke="#2c7fd0"/></svg></button>
      <button aria-label="Lock 3D view"><svg class="s" viewBox="0 0 16 16"><path d="M1 7l6-6 7 5M3 6v7l5 2M7 5v9"/><path d="M9 9h6v5H9z" fill="#7bb" /><path d="M10 9V7h4v2"/></svg></button>
      <button aria-label="Temporary hide"><svg class="s" viewBox="0 0 16 16"><path d="M1 4l3 5M15 2l-2 7"/><circle cx="5" cy="10" r="2.500"/><circle cx="11" cy="10" r="2.500"/><path d="M7 9h2"/></svg></button>
      <button aria-label="Reveal hidden"><svg class="s" viewBox="0 0 16 16"><circle cx="8" cy="6" r="3" fill="#e8f3ff" stroke="#2c7fd0"/><path d="M8 9v4" stroke="#2c7fd0" stroke-width="2"/></svg></button>
      <button aria-label="Temporary properties"><svg class="s" viewBox="0 0 16 16"><path d="M2 2h11v11H2z" stroke="#111" stroke-width="2" stroke-dasharray="2 1"/><circle cx="11" cy="11" r="3" fill="#fff"/><path d="M5 5h5M5 8h3"/></svg></button>
      <button aria-label="Analytical model"><svg class="s" viewBox="0 0 16 16"><path d="M1 6l4-4h8M1 6h8v8M3 6v8M6 6v8" /><path d="M1 9h8M1 12h8" stroke="#d22"/><circle cx="13" cy="7" r="2.500" fill="#e8f3ff" stroke="#2c7fd0"/><path d="M13 10v3" stroke="#2c7fd0"/></svg></button>
      <button aria-label="Displacement sets"><svg class="s" viewBox="0 0 16 16"><path d="M2 7l3-3h4v8l-3 2H2zM9 4l3-2h3v8l-3 2" fill="#aaa"/></svg></button>
      <button aria-label="Reveal constraints"><svg class="s" viewBox="0 0 16 16"><path d="M1 3h14M1 1v4M15 1v4M1 14h4"/><path d="M9 9h6v5H9z" fill="#888"/><path d="M10 9V7h4v2"/></svg></button>
      <button class="tiny" aria-label="Scroll left"><svg width="8" height="10" viewBox="0 0 8 10"><path d="M6 1L2 5l4 4" stroke-width="2"/></svg></button>
      <div class="hscroll"><i></i></div>
      <button class="tiny" aria-label="Scroll right"><svg width="8" height="10" viewBox="0 0 8 10"><path d="M2 1l4 4-4 4" stroke-width="2"/></svg></button>
      <svg class="grip" width="16" height="16" viewBox="0 0 16 16"><path d="M13 4v2M13 8v2M13 12v2M9 8v2M9 12v2M5 12v2" stroke="#aaa" stroke-width="2"/></svg>
    </div>
  </section>
</main>

<footer class="status">
  <span class="msg">Click or Drag</span>
  <div class="smid">
    <svg class="s" viewBox="0 0 16 16"><path d="M5 2h5v5H5z" fill="#bfe3a8" stroke="#2a7a2a"/><path d="M1 7h6v8H1z" fill="#a9d5f7" stroke="#1270c8"/><path d="M12 6v9M10 5c0 3 4 3 4 0" stroke-width="2" stroke="#456"/></svg>
    <select class="ws" aria-label="Active workset"><option></option></select>
    <button aria-label="Editing requests"><svg class="s" viewBox="0 0 16 16"><path d="M4 2h8v4H4zM8 6v4l-5 5h4l4-5" fill="#ddd" stroke="#888"/></svg>:0</button>
    <button class="do" aria-label="Design options"><svg class="s" viewBox="0 0 16 16"><rect x="1" y="2" width="14" height="12" fill="#fff"/><path d="M1 4h14" stroke-width="2"/><path d="M3 7h2M7 7h6M3 10h2M7 10h6M3 12h2M7 12h6"/></svg></button>
    <svg class="s" viewBox="0 0 16 16"><path d="M1 1h13v14H1z" fill="#999" stroke="none"/><path d="M3 11h5M8 8l3 3-3 3" stroke="#eee"/></svg>
    <select aria-label="Active design option"><option>Main Model</option></select>
  </div>
  <div class="sright">
    <button aria-label="Select links"><svg class="s" viewBox="0 0 16 16"><rect x="1" y="2" width="7" height="5" rx="2" stroke="#d8a010" stroke-width="2"/><rect x="7" y="2" width="7" height="5" rx="2" stroke="#d8a010" stroke-width="2"/><use href="#cursor" x="6" y="4" width="9" height="12"/></svg></button>
    <button aria-label="Select underlay elements"><svg class="s" viewBox="0 0 16 16"><path d="M1 10l6-6M1 14h7L5 9z" stroke="#1270c8"/><use href="#redx" x="8" y="0" width="8" height="8"/><use href="#cursor" x="7" y="5" width="8" height="11"/></svg></button>
    <button aria-label="Select pinned elements"><svg class="s" viewBox="0 0 16 16"><path d="M3 1h7v3L9 5v4l2 2H1l2-2V5zM6 11v4" fill="#e98b3c" stroke="#a04e10"/><use href="#cursor" x="7" y="5" width="8" height="11"/></svg></button>
    <button aria-label="Select elements by face"><svg class="s" viewBox="0 0 16 16"><path d="M2 4l6-2v10l-6 3z" fill="#bfe0ff" stroke="#1270c8"/><use href="#redx" x="8" y="0" width="8" height="8"/><use href="#cursor" x="7" y="5" width="8" height="11"/></svg></button>
    <button aria-label="Drag elements on selection"><svg class="s" viewBox="0 0 16 16"><path d="M5 1v10M1 6h9M4 2h2M4 10h2" stroke-width="2"/><use href="#redx" x="8" y="0" width="8" height="8"/><use href="#cursor" x="7" y="5" width="8" height="11"/></svg></button>
    <button aria-label="Background processes"><svg class="s" viewBox="0 0 16 16"><circle cx="8" cy="8" r="5" stroke="#a5a5a5" stroke-width="3" stroke-dasharray="3 1"/></svg></button>
    <button aria-label="Filter selection"><svg class="s" viewBox="0 0 16 16"><path d="M1 2h14l-5 6v7l-4-3V8z" fill="#c5cad4"/></svg>:0</button>
  </div>
</footer>
</div>

<svg class="marks" aria-hidden="true">
  <defs>
    <g id="mark">
      <path class="gem" d="M-13 3-8-9 12-14 14 14-13 11zM-8 3 1 9M2-3-6 1 8 11V0L3 4M2-3l8-4v4"/>
      <g transform="translate(18 -10) rotate(-45)"><text class="wa">DIAMONDGROUP-RO</text><text class="wb" y="14">WWW.DIAMONDGROUP-RO.COM</text></g>
    </g>
    <g id="markrow"><use href="#mark" x="71"/><use href="#mark" x="404"/><use href="#mark" x="737"/><use href="#mark" x="1070"/><use href="#mark" x="1403"/><use href="#mark" x="1736"/></g>
  </defs>
  <use href="#markrow" y="243"/><use href="#markrow" y="576"/><use href="#markrow" y="909"/>
</svg>
</body>
</html>
```
FILE: styles.css
```css
* { box-sizing: border-box; }
body { margin: 0; font: 12px/16px "Open Sans", "Noto Sans", sans-serif; color: #1c1c1c; overflow: hidden; position: relative; }
h1, h2 { margin: 0; font-size: 12px; font-weight: 400; }
ul { margin: 0; padding: 0; list-style: none; }
button, input, select { font: inherit; color: inherit; margin: 0; padding: 0; border: 0; background: none; border-radius: 0; }
svg { fill: none; stroke: #3a4150; flex: none; }
.defs { position: absolute; width: 0; height: 0; }
.s { width: 16px; height: 16px; }

.app { height: 100vh; display: flex; flex-direction: column; background: #cbcbcb; }

/* title bar */
.titlebar { height: 29px; flex: none; display: grid; grid-template-columns: 1fr auto 1fr; align-items: start; color: #333; position: relative; }
.titlebar .title { grid-column: 2; grid-row: 1; line-height: 20px; margin-left: 114px; }
.qat { display: flex; align-items: center; height: 24px; grid-row: 1; grid-column: 1; padding-left: 1px; }
.q { width: 24px; height: 22px; display: flex; align-items: center; justify-content: center; flex: none; }
.q.first { margin-left: 4px; }
.q.gap { margin-left: 8px; }
.q.on { background: #cfe4f8; border: 1px solid #1467c4; }
.q.dim { opacity: .45; }
.q.wide { width: 32px; }
.q.sign { width: auto; gap: 5px; margin-right: 45px; }
.caret { width: 12px; height: 22px; display: grid; place-content: center; flex: none; }
.caret::before { content: ""; border: 3px solid transparent; border-top: 4px solid #333; border-bottom: 0; }
.caret.left::before { border: 3px solid transparent; border-right: 4px solid #333; border-left: 0; }
.caret.bar { gap: 2px; }
.caret.bar::before { border: 0; height: 1px; width: 8px; background: #333; }
.caret.bar::after { content: ""; border: 4px solid transparent; border-top: 4px solid #333; border-bottom: 0; }
.vsep { width: 1px; height: 22px; background: #bdbdbd; margin: 0 3px; flex: none; }
.info { grid-column: 3; grid-row: 1; justify-self: end; display: flex; align-items: center; height: 24px; margin-right: 128px; }
.winbtns { position: absolute; right: 0; top: 0; display: flex; height: 24px; }
.winbtns button { width: 25px; display: grid; place-items: center; }

/* ribbon tabs */
.tabs { display: flex; height: 20px; flex: none; }
.tabs button { padding: 0 9px; line-height: 20px; color: #333; white-space: nowrap; }
.tabs button:nth-child(-n+11) { padding-right: 8px; }
.tabs .file { background: #2a79af; color: #fff; width: 45px; margin-right: 3px; }
.tabs .cur { background: #eee; color: #111; }
.tabs .ribtoggle { margin-left: 12px; display: grid; place-items: center; }

/* ribbon */
.ribbon { display: flex; height: 96px; flex: none; background: #eee; border-bottom: 1px solid #c6c6c6; }
.grp { display: flex; flex-direction: column; border-right: 1px solid #dcdcdc; flex: none; }
.grp h2 { text-align: center; line-height: 18px; margin-top: 1px; color: #333; }
.grp h2 b { display: inline-block; border: 4px solid transparent; border-top-color: #333; border-bottom: 0; vertical-align: 2px; margin-left: 3px; }
.tools { display: grid; height: 75px; }
.tool { display: flex; flex-direction: column; align-items: center; padding-top: 5px; position: relative; color: #333; }
.tool span { line-height: 15px; margin-top: 4px; text-align: center; width: min-content; white-space: normal; }
.tool .i { width: 32px; height: 32px; }
.tool[disabled] { color: #a3a3a3; }
.tool[disabled] svg { stroke: #adadad; }
.i.blue { stroke: #0e62b0; }
.tool.on { background: linear-gradient(#d5e7f8, #a9cff2); border: 1px solid #1467c4; margin-top: 3px; padding-top: 1px; }
.tool.drop::after, .tool.side::after { content: ""; border: 3px solid transparent; border-top: 4px solid #333; border-bottom: 0; }
.tool.drop::after { margin-top: 2px; }
.tool.side::after { position: absolute; right: 4px; top: 56px; }
.g-select { width: 58px; } .g-select .tools { grid-template-columns: 44px; padding-left: 7px; }
.g-build .tools { grid-template-columns: 42px 40px 50px 86px 64px 52px 38px 52px 45px 46px 45px; padding: 0 4px 0 3px; }
.g-circ .tools { grid-template-columns: 56px 40px 35px; padding: 0 4px 0 3px; }
.g-model .tools { grid-template-columns: 40px 40px 54px; padding-left: 3px; }
.g-room .tools { grid-template-columns: 42px 52px 58px 40px 58px 46px; padding: 0 2px 0 1px; }
.g-open .tools { grid-template-columns: 40px 36px 40px 44px 46px; padding: 0 2px 0 1px; }
.g-datum .tools { grid-template-columns: 40px 36px; padding: 0 4px 0 2px; }
.g-plane { border-right: 0; } .g-plane .tools { grid-template-columns: 40px 38px 40px 38px; padding-left: 2px; }
.options { height: 27px; flex: none; background: #eee; }

/* work area */
.work { flex: 1; min-height: 0; display: grid; grid-template-columns: 260px 259px 1fr; }
.browser, .props { display: flex; flex-direction: column; min-height: 0; border-right: 3px solid #c9c9c9; border-top: 2px solid #c9c9c9; background: #fff; }
.phead { display: flex; justify-content: space-between; align-items: center; height: 19px; flex: none; background: #eee; padding: 0 5px 0 3px; color: #333; }
.x { width: 10px; height: 10px; background: linear-gradient(45deg, transparent 43%, #222 43% 57%, transparent 57%), linear-gradient(-45deg, transparent 43%, #222 43% 57%, transparent 57%); }

.tree { color: #111; }
.tree > li { margin-left: 9px; }
.tree ul { margin-left: 20px; }
.tree li { position: relative; }
.tree li::before { content: ""; position: absolute; left: 0; top: 0; bottom: 0; border-left: 1px dotted #999; }
.tree > li:first-child::before { top: 9px; }
.tree li:last-child::before { bottom: auto; height: 10px; }
.row { position: relative; height: 18px; display: flex; align-items: center; gap: 5px; padding-left: 18px; white-space: nowrap; }
.row::before { content: ""; position: absolute; left: 1px; top: 10px; width: 15px; border-top: 1px dotted #999; }
.tree > li > .row { padding-left: 13px; }
.tree > li > .row::before { width: 11px; }
.hot { background: #dedede; margin-left: -3px; padding: 0 3px; line-height: 18px; }
.ex { position: absolute; left: -4px; top: 6px; width: 9px; height: 9px; border: 1px solid #8a8a8a; background: #fff; color: #24408f; font: 9px/7px "Liberation Sans", sans-serif; text-align: center; }

.type { display: flex; align-items: center; height: 71px; flex: none; background: #eee; border: 1px solid #cfcfcf; padding: 2px; margin: 0 1px; color: #333; }
.thumb { width: 66px; height: 66px; border: 1px solid #d0d0d0; display: grid; place-items: center; margin-right: 4px; }
.type b, .nav b { border: 4px solid transparent; border-top: 4px solid #333; border-bottom: 0; margin-left: auto; }
.inst { display: flex; align-items: center; height: 25px; flex: none; background: #eee; padding-left: 1px; }
select { appearance: none; background: url("data:image/svg+xml,%3Csvg xmlns='http://www.w3.org/2000/svg' width='10' height='6'%3E%3Cpath d='M1 1l4 4 4-4' fill='none' stroke='%23666'/%3E%3C/svg%3E") no-repeat right 4px center; }
.inst select { width: 172px; height: 23px; border: 1px solid #adadad; background-color: #e1e1e1; padding-left: 3px; }
.edtype { display: flex; align-items: center; gap: 5px; padding-left: 6px; }
.pscroll { flex: 1; min-height: 0; overflow: hidden; padding: 0 1px; }
.pt { border-collapse: collapse; table-layout: fixed; width: 100%; color: #000; }
.c1 { width: 121px; } .c2 { width: 120px; }
.pt th, .pt td { padding: 0; height: 18px; line-height: 17px; font-weight: 400; text-align: left; border-bottom: 1px dotted #888; border-right: 1px dotted #888; white-space: nowrap; }
.pt th { padding-left: 7px; }
.pt td { padding-left: 2px; }
.pt .sec th { background: #dbdbdb; padding-left: 1px; border: 0; }
.sec i { float: right; font: 700 13px/14px "Open Sans", sans-serif; transform: rotate(90deg); margin: 2px 4px 0 0; width: 12px; height: 14px; text-align: center; }
.off { color: #7d7d7d; }
.pt input, .pt button { display: block; }
.tx { width: 119px; height: 17px; border: 1px solid #000; padding-left: 4px; margin-left: -2px; }
.pt button { width: 118px; height: 16px; line-height: 13px; background: #e1e1e1; border: 1px solid #adadad; border-width: 1px 2px 2px 1px; margin-left: -1px; }
.pt input[type=checkbox] { appearance: none; width: 13px; height: 13px; border: 1px solid #222; margin: 3px 0 0 1px; background: #fff; }
.pt input[disabled] { border-color: #ccc; }
.pfoot { display: flex; justify-content: space-between; align-items: center; height: 28px; flex: none; background: #f0f0f0; padding: 0 3px; border-bottom: 1px solid #c9c9c9; }
.pfoot a { color: #0b66cc; }
.pfoot button { width: 73px; height: 21px; background: #ccc; border: 1px solid #bfbfbf; color: #8a8a8a; }

/* drawing view */
.view { display: grid; grid-template-columns: 1fr 16px; grid-template-rows: 21px 1fr 17px; min-width: 0; min-height: 0; background: #fff; padding-bottom: 2px; }
.vtabs { grid-column: 1 / 3; background: #cbcbcb; display: flex; color: #333; }
.vtab { display: flex; align-items: center; gap: 8px; padding-left: 6px; width: 127px; padding-top: 2px; }
.vtab.cur { background: #fff; width: 130px; padding: 1px 6px 0 6px; color: #111; }
.vtab .x { margin-left: auto; }
.vtabs .caret { margin-left: auto; width: 18px; }
.canvas { position: relative; min-height: 0; overflow: hidden; }
.model { display: block; width: 100%; height: 100%; shape-rendering: crispEdges; }
.model path, .model circle, .model ellipse { vector-effect: non-scaling-stroke; }
.k { stroke: #000; } .dk { stroke: #2a1400; } .bl { stroke: #0a80f5; } .or { stroke: #ff8000; } .pu { stroke: #a348a3; } .na { stroke: #33338a; } .li { stroke: #b6ff00; } .w2 { stroke-width: 2; }
.sym { stroke: #0a3cc0; stroke-width: 2; }
.cube { stroke: #9a9a9a; shape-rendering: auto; }
.cube .k { stroke: #444; }
.ct { fill: #8e8e92; stroke: none; font: 700 25px "Open Sans", sans-serif; }
.ct .sm { font-size: 20px; }
.nav { position: absolute; right: 2px; top: 174px; width: 35px; height: 117px; border: 2px solid #c2c2c2; border-radius: 5px; background: #f5f5f5; display: flex; flex-direction: column; align-items: center; gap: 2px; padding: 1px; }
.nav button { display: grid; align-self: flex-end; }
.nav .mid { align-self: center; margin-top: 5px; }
.nav hr { width: 25px; border: 0; border-top: 1px solid #c2c2c2; margin: 2px 0 0; }
.nav b { border-width: 3px; border-top: 3px solid #999; border-bottom: 0; margin: 5px auto 0; }
.nav > :last-child { margin-top: auto; }
.vscroll { background: #efefef; display: flex; flex-direction: column; align-items: center; justify-content: space-between; padding: 6px 0 4px; }
.vscroll i { width: 16px; height: 16px; background: #cdcdcd; }
.vscroll button { display: grid; }
.vbar { grid-column: 1 / 3; background: #efefef; display: flex; align-items: center; padding-left: 26px; }
.vbar button { width: 21px; display: grid; place-items: center; }
.vbar .scale { width: 52px; display: block; text-align: left; line-height: 17px; }
.vbar .tiny { width: 18px; }
.hscroll { flex: 1; display: flex; }
.hscroll i { width: 17px; height: 15px; background: #cdcdcd; margin-left: 49%; }

/* status bar */
.status { height: 24px; flex: none; display: grid; grid-template-columns: 896px 1fr auto; align-items: center; color: #111; padding-top: 2px; }
.msg { padding-left: 1px; }
.smid, .sright { display: flex; align-items: center; }
.status button { display: flex; align-items: center; }
.status select { width: 204px; height: 18px; background-color: #fff; margin-left: 8px; padding-left: 2px; color: #7a7a7a; }
.status .smid .do { margin: 0 10px 0 22px; }
.smid select + button { margin-left: 9px; gap: 4px; }
.sright { gap: 10px; padding-right: 70px; }

/* watermark layer */
.marks { position: absolute; inset: 0; width: 100%; height: 100%; pointer-events: none; opacity: .25; }
.gem { stroke: #444; stroke-width: 3; }
.wa, .wb { fill: #777; stroke: none; font-family: Lato, sans-serif; }
.wa { font-size: 20px; }
.wb { font-size: 13px; }
```
